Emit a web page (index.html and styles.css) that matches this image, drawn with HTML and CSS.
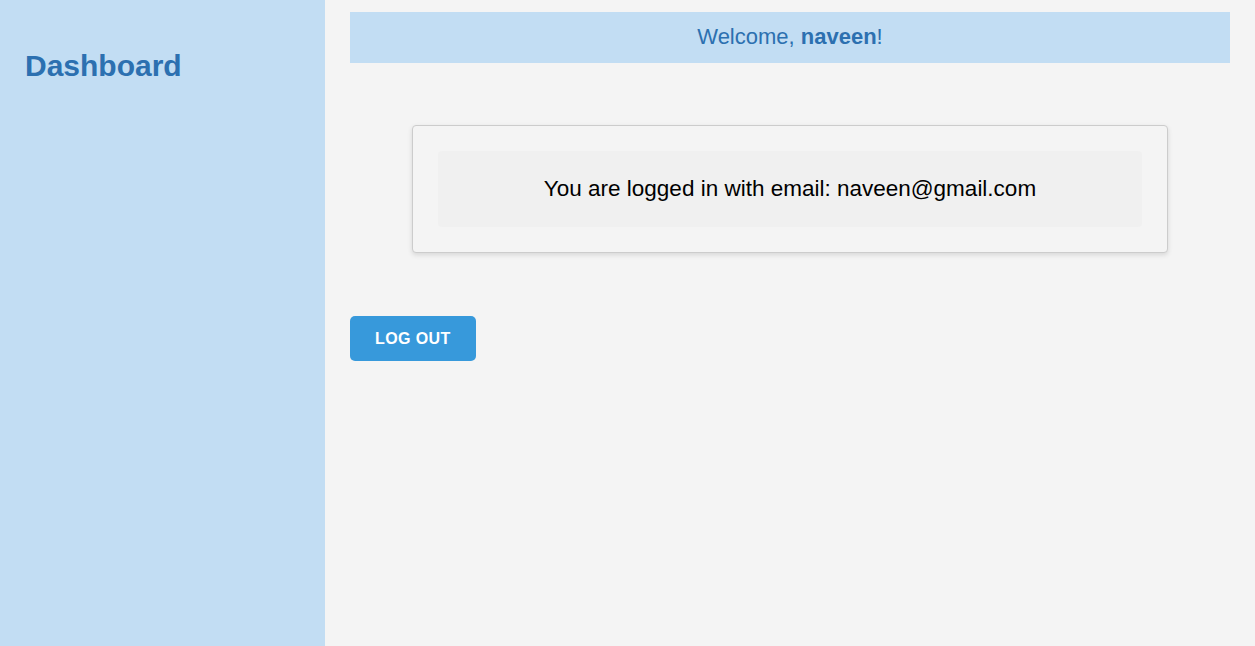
FILE: index.html
```html
<!DOCTYPE html>
<html>
<head>
<meta charset="utf-8">
<title>Dashboard</title>
<link rel="stylesheet" href="styles.css">
</head>
<body>
<div class="layout">
  <aside class="sidebar">
    <h2 class="sidebar-title">Dashboard</h2>
  </aside>
  <main class="main">
    <header class="welcome">Welcome, <strong>naveen</strong>!</header>
    <section class="card">
      <div class="card-inner">You are logged in with email: naveen@gmail.com</div>
    </section>
    <div class="actions">
      <button class="logout">LOG OUT</button>
    </div>
  </main>
</div>
</body>
</html>
```
FILE: styles.css
```css
* { box-sizing: border-box; }
html, body { margin: 0; padding: 0; height: 100%; }
body {
  font-family: "Liberation Sans", Arial, sans-serif;
  background: #f4f4f4;
}
.layout {
  display: flex;
  min-height: 100vh;
}
.sidebar {
  width: 325px;
  flex-shrink: 0;
  background: #c2ddf3;
  padding: 49px 25px 0 25px;
}
.sidebar-title {
  margin: 0;
  font-size: 30px;
  font-weight: bold;
  color: #2c70b0;
}
.main {
  flex: 1;
  padding: 12px 25px 0 25px;
  display: flex;
  flex-direction: column;
}
.welcome {
  background: #c2ddf3;
  color: #2c70b0;
  font-size: 22px;
  line-height: 25px;
  padding: 12px 0 14px;
  text-align: center;
}
.card {
  align-self: center;
  width: 756px;
  margin-top: 62px;
  background: #f4f4f4;
  border: 1px solid #cccccc;
  border-radius: 4px;
  box-shadow: 0 2px 5px rgba(0,0,0,0.12);
  padding: 25px;
}
.card-inner {
  background: #f0f0f0;
  border-radius: 4px;
  padding: 25px;
  text-align: center;
  font-size: 22.5px;
  line-height: 26px;
  color: #000;
}
.actions {
  margin-top: 63px;
  display: flex;
}
.logout {
  font-family: "Liberation Sans", Arial, sans-serif;
  background: #3799db;
  color: #fff;
  border: none;
  border-radius: 5px;
  font-size: 16px;
  font-weight: bold;
  letter-spacing: 0.4px;
  line-height: 18px;
  padding: 13px 25px;
  height: 45px;
  cursor: pointer;
}
```
